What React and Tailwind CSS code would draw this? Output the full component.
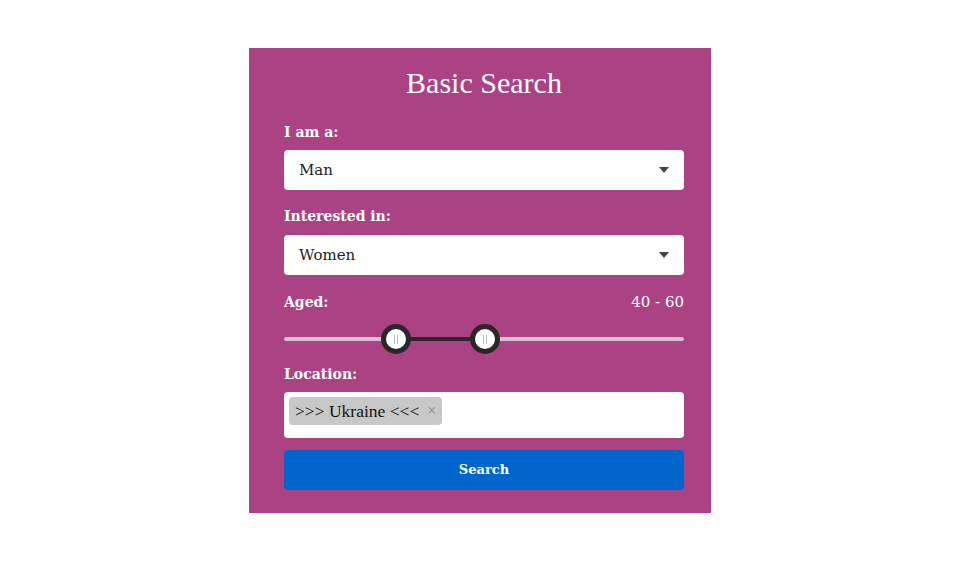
import React from "react";

const Caret = () => (
  <svg className="h-[6px] w-[10px]" viewBox="0 0 10 6">
    <path d="M0 0h10L5 6z" fill="#444" />
  </svg>
);

const Select = ({ value }) => (
  <div className="flex h-10 w-full items-center justify-between rounded bg-white pl-[15px] pr-[15px] font-['DejaVu_Serif',serif] text-[15px] text-[#222]">
    <span>{value}</span>
    <Caret />
  </div>
);

const Label = ({ children, className = "" }) => (
  <div className={`font-['DejaVu_Serif',serif] text-[14px] font-bold leading-5 text-white ${className}`}>{children}</div>
);

const Handle = ({ left }) => (
  <div
    className="absolute top-1/2 flex h-[30px] w-[30px] -translate-x-1/2 -translate-y-1/2 items-center justify-center gap-[2px] rounded-full border-[5px] border-[#2b2628] bg-white"
    style={{ left }}
  >
    <span className="h-[9px] w-px bg-[#bbb]" />
    <span className="h-[9px] w-px bg-[#bbb]" />
  </div>
);

export default function App() {
  return (
    <div className="min-h-screen w-full bg-white pt-12 font-['Liberation_Serif',serif]">
      <div className="mx-auto w-[462px] bg-[#ab4283] pb-[23px] pl-[35px] pr-[27px] pt-[17px]">
        <h1 className="text-center text-[30px] leading-9 text-white">Basic Search</h1>

        <Label className="mt-[21px] mb-2">I am a:</Label>
        <Select value="Man" />

        <Label className="mt-4 mb-[9px]">Interested in:</Label>
        <Select value="Women" />

        <div className="mt-[17px] flex items-center justify-between text-white">
          <Label>Aged:</Label>
          <span className="font-['DejaVu_Serif',serif] text-[15px] leading-5">40 - 60</span>
        </div>

        <div className="relative mt-2 h-[38px]">
          <div className="absolute left-0 right-0 top-1/2 h-1 -translate-y-1/2 rounded-full bg-[#d3c3d3]" />
          <div className="absolute top-1/2 h-1 -translate-y-1/2 bg-[#2b2628]" style={{ left: "28%", width: "22.25%" }} />
          <Handle left="28%" />
          <Handle left="50.25%" />
        </div>

        <Label className="mt-[6px] mb-2">Location:</Label>
        <div className="flex h-[46px] w-full items-start rounded bg-white px-[5px] pt-[5px]">
          <span className="flex h-7 items-center gap-[8px] rounded bg-[#c8c8c8] px-[6px] text-[17.5px] text-[#111]">
            &gt;&gt;&gt; Ukraine &lt;&lt;&lt;
            <span className="text-[16px] text-[#888]">×</span>
          </span>
        </div>

        <button className="mt-3 flex h-10 w-full items-center justify-center rounded bg-[#0066cc] font-['DejaVu_Serif',serif] text-[13px] font-bold text-white">
          Search
        </button>
      </div>
    </div>
  );
}
